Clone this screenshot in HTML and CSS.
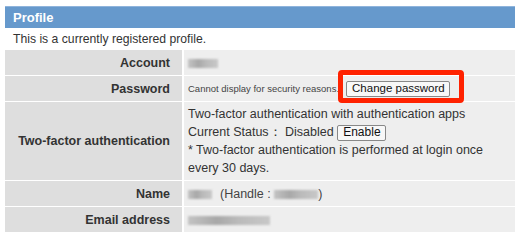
FILE: index.html
```html
<!DOCTYPE html>
<html lang="en">
<head>
    <meta charset="UTF-8">
    <title>Profile</title>
    <link rel="stylesheet" href="styles.css">
</head>
<body>
    <div class="container">
        <!-- Profile header -->
        <div class="section-title">Profile</div>
        <p class="intro">This is a currently registered profile.</p>

        <table class="profile-table">
            <tr class="row-short">
                <th>Account</th>
                <td><span class="blur" style="width: 30px"></span></td>
            </tr>
            <tr class="row-short">
                <th>Password</th>
                <td>
                    <span class="note">Cannot display for security reasons.</span><span class="mark"><button type="button" class="btn">Change password</button></span>
                </td>
            </tr>
            <tr>
                <th>Two-factor authentication</th>
                <td class="tfa">
                    Two-factor authentication with authentication apps<br>
                    Current Status：&nbsp;Disabled <button type="button" class="btn btn-small">Enable</button><br>
                    * Two-factor authentication is performed at login once every 30 days.
                </td>
            </tr>
            <tr class="row-short">
                <th>Name</th>
                <td><span class="blur" style="width: 24px"></span><span class="handle">(Handle : <span class="blur" style="width: 44px"></span>)</span></td>
            </tr>
            <tr class="row-short">
                <th>Email address</th>
                <td><span class="blur" style="width: 82px"></span></td>
            </tr>
        </table>
    </div>
</body>
</html>
```

FILE: styles.css
```css
body {
    margin: 0;
    font-family: "Liberation Sans", Arial, sans-serif;
    color: #333;
    background-color: #fff;
}

.container {
    width: 510px;
    padding: 6px 0 0 5px;
}

.section-title {
    height: 21px;
    line-height: 21px;
    padding-left: 8px;
    background-color: #6699cc;
    border-top: 1px solid #8fb4dc;
    color: #fff;
    font-size: 13px;
    font-weight: bold;
}

.intro {
    margin: 0;
    height: 22px;
    line-height: 23px;
    padding-left: 8px;
    font-size: 12.2px;
    color: #333;
}

.profile-table {
    width: 510px;
    border-collapse: collapse;
    font-size: 12.5px;
}

.profile-table th,
.profile-table td {
    border-bottom: 1px solid #fff;
    padding: 0;
}

.profile-table th {
    width: 165px;
    padding-right: 12px;
    border-right: 2px solid #fff;
    background-color: #dedede;
    text-align: right;
    font-size: 12.5px;
    font-weight: bold;
    color: #333;
}

.profile-table td {
    padding-left: 4px;
    background-color: #eeeeee;
    line-height: 18px;
}

.row-short th,
.row-short td {
    height: 25px;
}

.tfa {
    padding-top: 3px !important;
    padding-bottom: 3px !important;
}

.note {
    font-size: 9.5px;
    color: #444;
}

.btn {
    display: inline-block;
    font-family: "Liberation Sans", Arial, sans-serif;
    font-size: 11.5px;
    color: #111;
    background-color: #f8f8f8;
    border: 1px solid #888;
    border-radius: 2px;
    padding: 0 5px;
    height: 16px;
    line-height: 13px;
    white-space: nowrap;
    vertical-align: middle;
}

.btn-small {
    width: 49px;
    font-size: 12px;
}

.mark {
    position: relative;
    display: inline-block;
    vertical-align: middle;
    margin-left: 7px;
}

.mark .btn {
    display: block;
    width: 104px;
}

/* red annotation box around the button */
.mark::after {
    content: "";
    position: absolute;
    left: -8px;
    top: -11px;
    width: 116px;
    height: 23px;
    border: 5px solid #ff2200;
    border-radius: 4px;
}

.blur {
    display: inline-block;
    height: 9px;
    vertical-align: middle;
    background: linear-gradient(90deg, #c4c4c4, #a8a8a8 35%, #bababa 60%, #c8c8c8);
    filter: blur(0.8px);
}

.handle {
    margin-left: 8px;
    color: #444;
}
```
